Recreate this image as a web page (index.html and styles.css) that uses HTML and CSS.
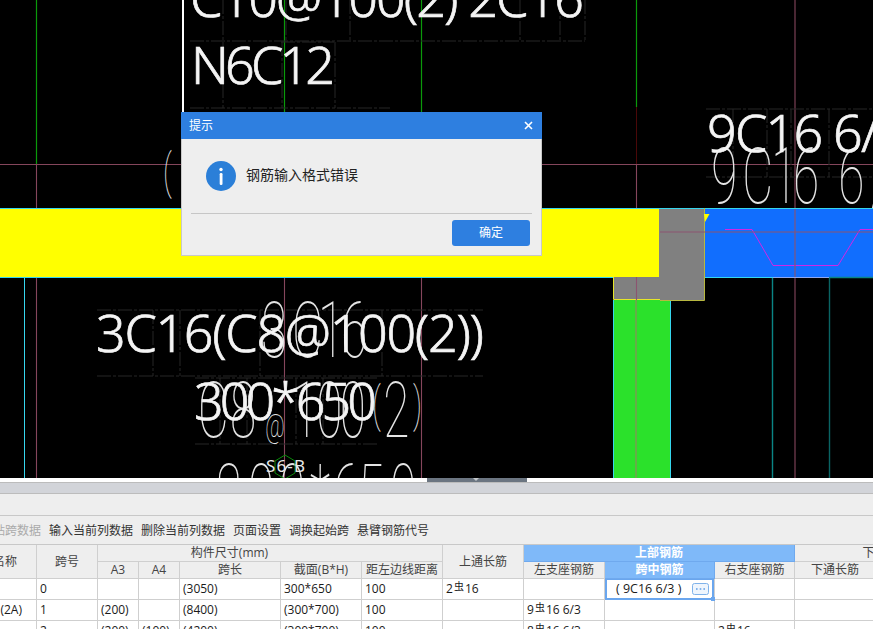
FILE: index.html
```html
<!DOCTYPE html>
<html lang="zh-CN">
<head>
<meta charset="utf-8">
<title>钢筋输入</title>
<link rel="stylesheet" href="styles.css">
</head>
<body>
<div class="canvas">
  <svg class="cad" width="873" height="478" viewBox="0 0 873 478">
    <rect class="yellow" x="0" y="209" width="660" height="68"/>
    <rect class="blue" x="704" y="209" width="169" height="68"/>
    <path class="gray" d="M659 209H704V300H614V277H659Z"/>
    <rect class="lime" x="614" y="300" width="56" height="178"/>
    <path class="cyan" d="M0 208.5H873M0 277.5H613M705 277.5H773M613.5 300V478M670.5 300V478M24.5 278V478"/>
    <path class="lav" d="M773 277.5H829"/>
    <path class="teal" d="M829 277.5H873"/>
    <path class="olive" d="M704.5 208V300.5H660"/>
    <path class="yline" d="M613.5 277V299.5H660"/>
    <path class="tri" d="M704 214H709.5L705 222Z"/>
    <path class="magenta" d="M725 229.5H752L773 265.5H838L860 229.5H873"/>
    <path class="teal" d="M772.5 278V478"/>
    <path class="teal dark" d="M829.5 278V478"/>
    <path class="green" d="M36.5 0V164M284.5 0V112M421.5 0V112M636.5 0V107"/>
    <path class="maroon" d="M636.5 107V164"/>
    <path class="pink" d="M0 164.5H873M36.5 164V208M36.5 278V478M284.5 278V478M421.5 278V478M636.5 164V208M795 0V208M795 278V478"/>
    <path class="pink thin" d="M660 232H873M795 209V277M636.5 277V300"/>
    <path class="pinkgray" d="M636 300V478"/>
    <path class="white" d="M183 0V112"/>
    <path class="faint" d="M190 41H585M585 0V41M223 42V108M282 42V108M281 42H334M335 42V108M190 108H390M223 0V41M286 0V41M350 0V41M520 0V41M560 0V41M706 109H873M706 177H873M733 109V177M767 109V177M791 109V177M829 109V177M97 310H483M97 376H483M153 310V376M180 310V376M260 310V376M382 310V376M195 378H378M195 444H378M220 378V444M247 378V444M296 378V444M323 378V444"/>
    <text class="stick paren" transform="translate(0 188) scale(.62 1)" x="263">(</text>
    <text class="stick" transform="translate(0 203) scale(.62 1)" x="1147 1197 1244 1279 1352 1405">9C166/</text>
    <text class="stick" transform="translate(0 357) scale(.62 1)" x="421 471 513 550">3C16</text>
    <text class="stick" transform="translate(0 437) scale(.62 1)"><tspan x="319 371">C8</tspan><tspan class="at" x="428">@</tspan><tspan x="471 510 548">100</tspan><tspan x="618">2</tspan></text>
    <text class="stick paren" transform="translate(0 421) scale(.62 1)" x="600 666">()</text>
    <text class="stick" transform="translate(0 519) scale(.62 1)" x="348 400 450 500 537 577 629">300*650</text>
    <text class="big" x="190" y="17" textLength="394">C10@100(2) 2C16</text>
    <text class="big" x="191" y="84" textLength="144">N6C12</text>
    <text class="big" x="707" y="152" textLength="200">9C16 6/3</text>
    <text class="big" x="96" y="352" textLength="388">3C16(C8@100(2))</text>
    <text class="big" x="194" y="420" textLength="183">300*650</text>
    <path class="hex" d="M285 455L295 461V473L285 479L275 473V461Z"/>
    <text class="tag" x="266" y="472" textLength="39">S6-B</text>
  </svg>
</div>

<div class="splitter"><span class="grip"></span></div>
<div class="graybar"></div>
<div class="blank"></div>
<div class="toolbar">
  <span class="disabled">粘贴跨数据</span>
  <span>输入当前列数据</span>
  <span>删除当前列数据</span>
  <span>页面设置</span>
  <span>调换起始跨</span>
  <span>悬臂钢筋代号</span>
</div>

<table class="grid">
  <colgroup>
    <col class="c63"><col class="c61"><col class="c41"><col class="c41"><col class="c101"><col class="c81"><col class="c81"><col class="c81"><col class="c81"><col class="c110"><col class="c80"><col class="c81"><col class="c103">
  </colgroup>
  <thead>
    <tr>
      <th rowspan="2">名称</th>
      <th rowspan="2">跨号</th>
      <th colspan="5" class="dims">构件尺寸(mm)</th>
      <th rowspan="2">上通长筋</th>
      <th colspan="3" class="sel">上部钢筋</th>
      <th colspan="2">下部钢筋</th>
    </tr>
    <tr>
      <th>A3</th><th>A4</th><th>跨长</th><th>截面(B*H)</th><th>距左边线距离</th>
      <th>左支座钢筋</th><th class="sel">跨中钢筋</th><th>右支座钢筋</th><th>下通长筋</th><th></th>
    </tr>
  </thead>
  <tbody>
    <tr>
      <td></td><td>0</td><td></td><td></td><td>(3050)</td><td>300*650</td><td>100</td>
      <td>2<span class="bar">虫</span>16</td><td></td>
      <td class="editing">
        <div class="editor"><span>( 9C16 6/3 )</span>
          <svg class="more" width="17" height="12" viewBox="0 0 17 12"><rect x=".5" y=".5" width="16" height="11" rx="2"/><path d="M4 6h1.6M7.7 6h1.6M11.4 6h1.6"/></svg>
          <i class="handle"></i>
        </div>
      </td>
      <td></td><td></td><td></td>
    </tr>
    <tr>
      <td class="name">(2A)</td><td>1</td><td>(200)</td><td></td><td>(8400)</td><td>(300*700)</td><td>100</td>
      <td></td><td>9<span class="bar">虫</span>16 6/3</td><td></td><td></td><td></td><td></td>
    </tr>
    <tr>
      <td></td><td>2</td><td>(200)</td><td>(100)</td><td>(4200)</td><td>(300*700)</td><td>100</td>
      <td></td><td>8<span class="bar">虫</span>16 6/3</td><td></td><td>2<span class="bar">虫</span>16</td><td></td><td></td>
    </tr>
  </tbody>
</table>

<div class="dialog">
  <div class="dialog-head"><span>提示</span>
    <svg class="close" width="9" height="9" viewBox="0 0 9 9"><path d="M1 1L8 8M8 1L1 8"/></svg>
  </div>
  <div class="dialog-body">
    <svg class="info" width="30" height="30" viewBox="0 0 30 30"><circle cx="15" cy="15" r="15"/><rect class="info-i" x="13.7" y="12" width="2.8" height="12" rx="1.2"/><circle class="info-i" cx="15" cy="8.5" r="1.7"/></svg>
    <span class="message">钢筋输入格式错误</span>
  </div>
  <div class="dialog-foot"><button class="ok" type="button">确定</button></div>
</div>
</body>
</html>
```
FILE: styles.css
```css
* { box-sizing: border-box; }
html, body { margin: 0; padding: 0; }
body {
  position: relative;
  width: 873px;
  height: 629px;
  overflow: hidden;
  background: #fff;
  font: 12px/16px "Open Sans", "Noto Sans CJK SC", sans-serif;
  color: #333;
}

/* CAD drawing */
.canvas { height: 478px; background: #000; overflow: hidden; }
.cad { display: block; }
.cad path { fill: none; stroke-width: 1; }
.yellow { fill: #ff0; }
.blue { fill: #116efe; }
.cad .gray { fill: #808080; }
.lime { fill: #2be12b; }
.cad .cyan { stroke: #36d6ee; }
.cad .lav { stroke: #8fa8ee; }
.cad .olive { stroke: #b8b840; stroke-width: 1; }
.cad .yline { stroke: #e6e62a; }
.cad .tri { fill: #ff0; }
.cad .magenta { stroke: #d126e6; }
.cad .teal { stroke: #0a8585; stroke-width: 1.4; }
.cad .teal.dark { stroke: #0a6464; }
.cad .green { stroke: #0a9a0a; stroke-width: 1.2; }
.cad .maroon { stroke: #4a0808; }
.cad .pink { stroke: #85465c; stroke-width: 1.1; }
.cad .pink.thin { stroke: #8c5470; }
.cad .pinkgray { stroke: #8c8c5c; stroke-width: 1.2; }
.cad .white { stroke: #fff; stroke-width: 2; }
.cad .faint { stroke: #262626; stroke-dasharray: 14 2 3 2; }
.cad .hex { stroke: #0a8a0a; }
.big {
  fill: #f4f4f4;
  stroke: #f4f4f4;
  stroke-width: .7;
  font: 300 52px "Noto Sans", "Open Sans", sans-serif;
}
.stick {
  fill: #e4e4e4;
  font: 100 77px Roboto, sans-serif;
}
.stick.paren { font-size: 48px; }
.stick .at { font-size: 34px; }
.tag { fill: #e8e8e8; font: 17px "Noto Sans", sans-serif; }

/* Band between drawing and table */
.splitter { position: relative; height: 4px; background: #fff; }
.grip {
  position: absolute;
  left: 427px;
  top: 0;
  width: 100px;
  height: 4px;
  background: #6b7581;
}
.grip::after {
  content: "";
  position: absolute;
  left: 46px;
  top: 0;
  border: 3px solid transparent;
  border-top-color: #c4c8cc;
  border-bottom: 0;
}
.graybar {
  height: 12px;
  background: #d2d4d9;
  border-top: 1px solid #bcbcbc;
  border-bottom: 1px solid #bcbcbc;
}
.blank { height: 22px; background: #eee; border-bottom: 1px solid #c8c8c8; }
.toolbar {
  display: flex;
  align-items: center;
  gap: 8px;
  height: 28px;
  margin-left: -19px;
  padding-top: 2px;
  background: #eee;
  color: #333;
}
.disabled { color: #aaa; }

/* Table */
.grid {
  table-layout: fixed;
  width: 982px;
  margin-left: -26px;
  border-collapse: separate;
  border-spacing: 0;
  border-top: 1px solid #c8c8c8;
}
.c63 { width: 63px; }
.c61 { width: 61px; }
.c41 { width: 41px; }
.c101 { width: 101px; }
.c81 { width: 81px; }
.c110 { width: 110px; }
.c80 { width: 80px; }
.c103 { width: 103px; }
.grid th, .grid td {
  padding: 0;
  border-right: 1px solid #cfcfcf;
  border-bottom: 1px solid #cfcfcf;
  white-space: nowrap;
  overflow: hidden;
}
.grid th {
  height: 17px;
  background: #eee;
  font-weight: 400;
  color: #444;
  text-align: center;
}
.grid th.dims { padding-right: 81px; }
.grid th.sel {
  background: #7fb9f9;
  color: #fff;
  font-weight: 600;
  border-right-color: #6fa9ee;
  border-bottom-color: #6fa9ee;
}
.grid td {
  height: 21px;
  padding: 0 3px;
  background: #fff;
  color: #1a1a1a;
  font-size: 12px;
}
.grid td.name { padding: 0 14px 0 0; text-align: right; }
.bar { position: relative; top: -3px; margin: 0 1px; font-size: 10px; }
.grid td.editing { padding: 0; overflow: visible; position: relative; }
.editor {
  position: relative;
  display: flex;
  align-items: center;
  justify-content: space-between;
  height: 21px;
  margin-bottom: -1px;
  padding: 0 3px 0 9px;
  border: 2px solid #6aa6ee;
  border-top-width: 1px;
  font-size: 12.5px;
}
.more { display: block; }
.more rect { fill: #eef5fd; stroke: #7fb2ea; }
.more path { fill: none; stroke: #5f9ee6; stroke-width: 1.6; }
.handle {
  position: absolute;
  right: -3px;
  bottom: -3px;
  width: 4px;
  height: 4px;
  background: #6aa6ee;
}

/* Dialog */
.dialog {
  position: absolute;
  left: 181px;
  top: 112px;
  width: 361px;
  height: 144px;
  background: #eee;
  border: 1px solid #c8c8c8;
  border-top: 0;
}
.dialog-head {
  display: flex;
  align-items: center;
  justify-content: space-between;
  height: 27px;
  margin: 0 -1px;
  padding: 0 9px 0 8px;
  background: #2e7fe0;
  color: #fff;
}
.close { display: block; }
.close path { fill: none; stroke: #fff; stroke-width: 1.6; }
.dialog-body {
  display: flex;
  align-items: center;
  gap: 10px;
  height: 75px;
  margin: 0 9px;
  padding: 0 15px;
  border-bottom: 1px solid #c6c6c6;
  font-size: 14px;
  color: #222;
}
.message { margin-bottom: 2px; }
.info { flex: none; display: block; }
.info circle { fill: #2b7fd8; }
.info .info-i { fill: #fff; }
.dialog-foot { display: flex; justify-content: flex-end; padding: 6px 11px 0 0; }
.ok {
  width: 78px;
  height: 26px;
  padding: 0;
  border: 0;
  border-radius: 3px;
  background: #2e7fe0;
  color: #fff;
  font: inherit;
}
```
